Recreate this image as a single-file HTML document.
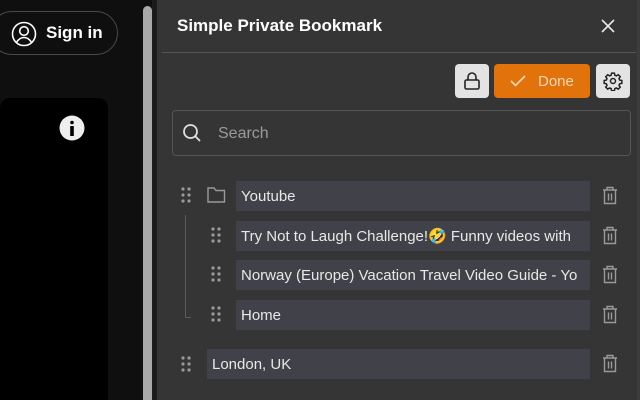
<!DOCTYPE html>
<html><head><meta charset="utf-8"><style>
*{box-sizing:border-box;margin:0;padding:0}
html,body{width:640px;height:400px;overflow:hidden}
body{background:#0f0f0f;font-family:"Liberation Sans",sans-serif;position:relative}
.a{position:absolute}
.signin{left:-10px;top:11px;width:128px;height:44px;border:1px solid #4a4a4a;border-radius:22px;color:#fff;font-weight:bold;font-size:17px}
.card{left:0;top:98px;width:108px;height:302px;background:#000;border-radius:10px 10px 0 0}
.panel{left:157px;top:0;width:483px;height:400px;background:#353535}
.inp{background:#414249;color:#e8e8e8;font-size:15px;height:30px;line-height:31px;padding-left:5px;white-space:nowrap;overflow:hidden}
.btn{border-radius:4px;height:34px;top:64px}
</style></head><body>
<div class="a signin"><svg class="a" style="left:20px;top:9px" width="26" height="26" viewBox="0 0 26 26" fill="none" stroke="#fff" stroke-width="1.6"><circle cx="13" cy="13" r="11.5"/><circle cx="13" cy="10" r="4.3"/><path d="M5.5 21.5c2-3.5 4.5-5 7.5-5s5.5 1.5 7.5 5"/></svg><span class="a" style="left:55px;top:11px">Sign in</span></div>
<div class="a card"></div>
<svg class="a" style="left:59px;top:115px" width="26" height="26" viewBox="0 0 26 26"><circle cx="13" cy="13" r="12.5" fill="#eee"/><circle cx="13" cy="7.5" r="1.8" fill="#000"/><rect x="11.2" y="11" width="3.6" height="10" fill="#000"/></svg>
<div class="a" style="left:143px;top:6px;width:9px;height:394px;background:#a9a9a9;border-radius:5px 5px 0 0"></div>
<div class="a" style="left:152px;top:0;width:5px;height:400px;background:#1b1b1b"></div>
<div class="a panel">
<div class="a" style="left:20px;top:16px;color:#fff;font-weight:bold;font-size:17px">Simple Private Bookmark</div>
<svg class="a" style="left:443px;top:18px" width="16" height="16" viewBox="0 0 16 16" stroke="#e6e6e6" stroke-width="1.6"><path d="M2 2L14 14M14 2L2 14"/></svg>
<div class="a" style="left:5px;top:52px;width:474px;height:1px;background:#555"></div>
<div class="a" style="right:0;top:0;width:3px;height:400px;background:#3c3c3c"></div>
<div class="a btn" style="left:298px;width:34px;background:#e3e3e3"><svg class="a" style="left:8px;top:7px" width="18" height="20" viewBox="0 0 18 20" fill="none" stroke="#222" stroke-width="1.6"><rect x="2" y="9" width="14" height="9" rx="1.5"/><path d="M5 9V6a4 4 0 0 1 8 0v3"/></svg></div>
<div class="a btn" style="left:337px;width:96px;background:#e2720a;color:#f7d9bd;font-size:15px"><svg class="a" style="left:16px;top:11px" width="16" height="12" viewBox="0 0 16 12" fill="none" stroke="#f7d9bd" stroke-width="1.6"><path d="M1 6l4.5 4.5L15 1"/></svg><span class="a" style="left:44px;top:9px">Done</span></div>
<div class="a btn" style="left:439px;width:34px;background:#e3e3e3"><svg class="a" style="left:7px;top:7px" width="20" height="20" viewBox="0 0 24 24" fill="none" stroke="#222" stroke-width="1.8"><circle cx="12" cy="12" r="3"/><path d="M10.3 2.5h3.4l.5 2.6 1.9.8 2.2-1.5 2.4 2.4-1.5 2.2.8 1.9 2.6.5v3.4l-2.6.5-.8 1.9 1.5 2.2-2.4 2.4-2.2-1.5-1.9.8-.5 2.6h-3.4l-.5-2.6-1.9-.8-2.2 1.5-2.4-2.4 1.5-2.2-.8-1.9-2.6-.5v-3.4l2.6-.5.8-1.9-1.5-2.2 2.4-2.4 2.2 1.5 1.9-.8z"/></svg></div>
<div class="a" style="left:15px;top:110px;width:459px;height:46px;border:1px solid #555;border-radius:4px"><svg class="a" style="left:9px;top:12px" width="20" height="20" viewBox="0 0 20 20" fill="none" stroke="#e0e0e0" stroke-width="1.8"><circle cx="8.5" cy="8.5" r="6.5"/><path d="M13.3 13.3L18 18"/></svg><span class="a" style="left:45px;top:14px;color:#9a9a9a;font-size:16px">Search</span></div>
<div class="a" style="left:28px;top:215px;width:6px;height:103px;border-left:1px solid #5a5a5a;border-bottom:1px solid #5a5a5a"></div>
<svg class="a" style="left:0;top:0" width="483" height="400" fill="#9a9a9a">
<defs>
<g id="d"><circle cx="0" cy="0" r="1.6"/><circle cx="6" cy="0" r="1.6"/><circle cx="0" cy="6" r="1.6"/><circle cx="6" cy="6" r="1.6"/><circle cx="0" cy="12" r="1.6"/><circle cx="6" cy="12" r="1.6"/></g>
<g id="t" fill="none" stroke="#9a9a9a" stroke-width="1.4"><path d="M-7 -6h14M-3 -6v-2.5h6v2.5M-5.5 -6v13.5h11v-13.5M-1.5 -2.5v7M1.5 -2.5v7"/></g>
</defs>
<use href="#d" x="26" y="189"/><use href="#d" x="56" y="229"/><use href="#d" x="56" y="268"/><use href="#d" x="56" y="308"/><use href="#d" x="26" y="358"/>
<path d="M51 188h6l2 2.5h8.5v11.5h-16.5z" fill="none" stroke="#9a9a9a" stroke-width="1.4"/>
<use href="#t" x="453" y="196"/><use href="#t" x="453" y="236"/><use href="#t" x="453" y="275"/><use href="#t" x="453" y="315"/><use href="#t" x="453" y="364"/>
</svg>
<div class="a inp" style="left:79px;top:181px;width:354px">Youtube</div>
<div class="a inp" style="left:79px;top:221px;width:354px;padding-right:8px;text-overflow:clip">Try Not to Laugh Challenge!🤣 Funny videos with</div>
<div class="a inp" style="left:79px;top:260px;width:354px">Norway (Europe) Vacation Travel Video Guide - Yo</div>
<div class="a inp" style="left:79px;top:300px;width:354px">Home</div>
<div class="a inp" style="left:50px;top:349px;width:383px">London, UK</div>
</div>
</body></html>
